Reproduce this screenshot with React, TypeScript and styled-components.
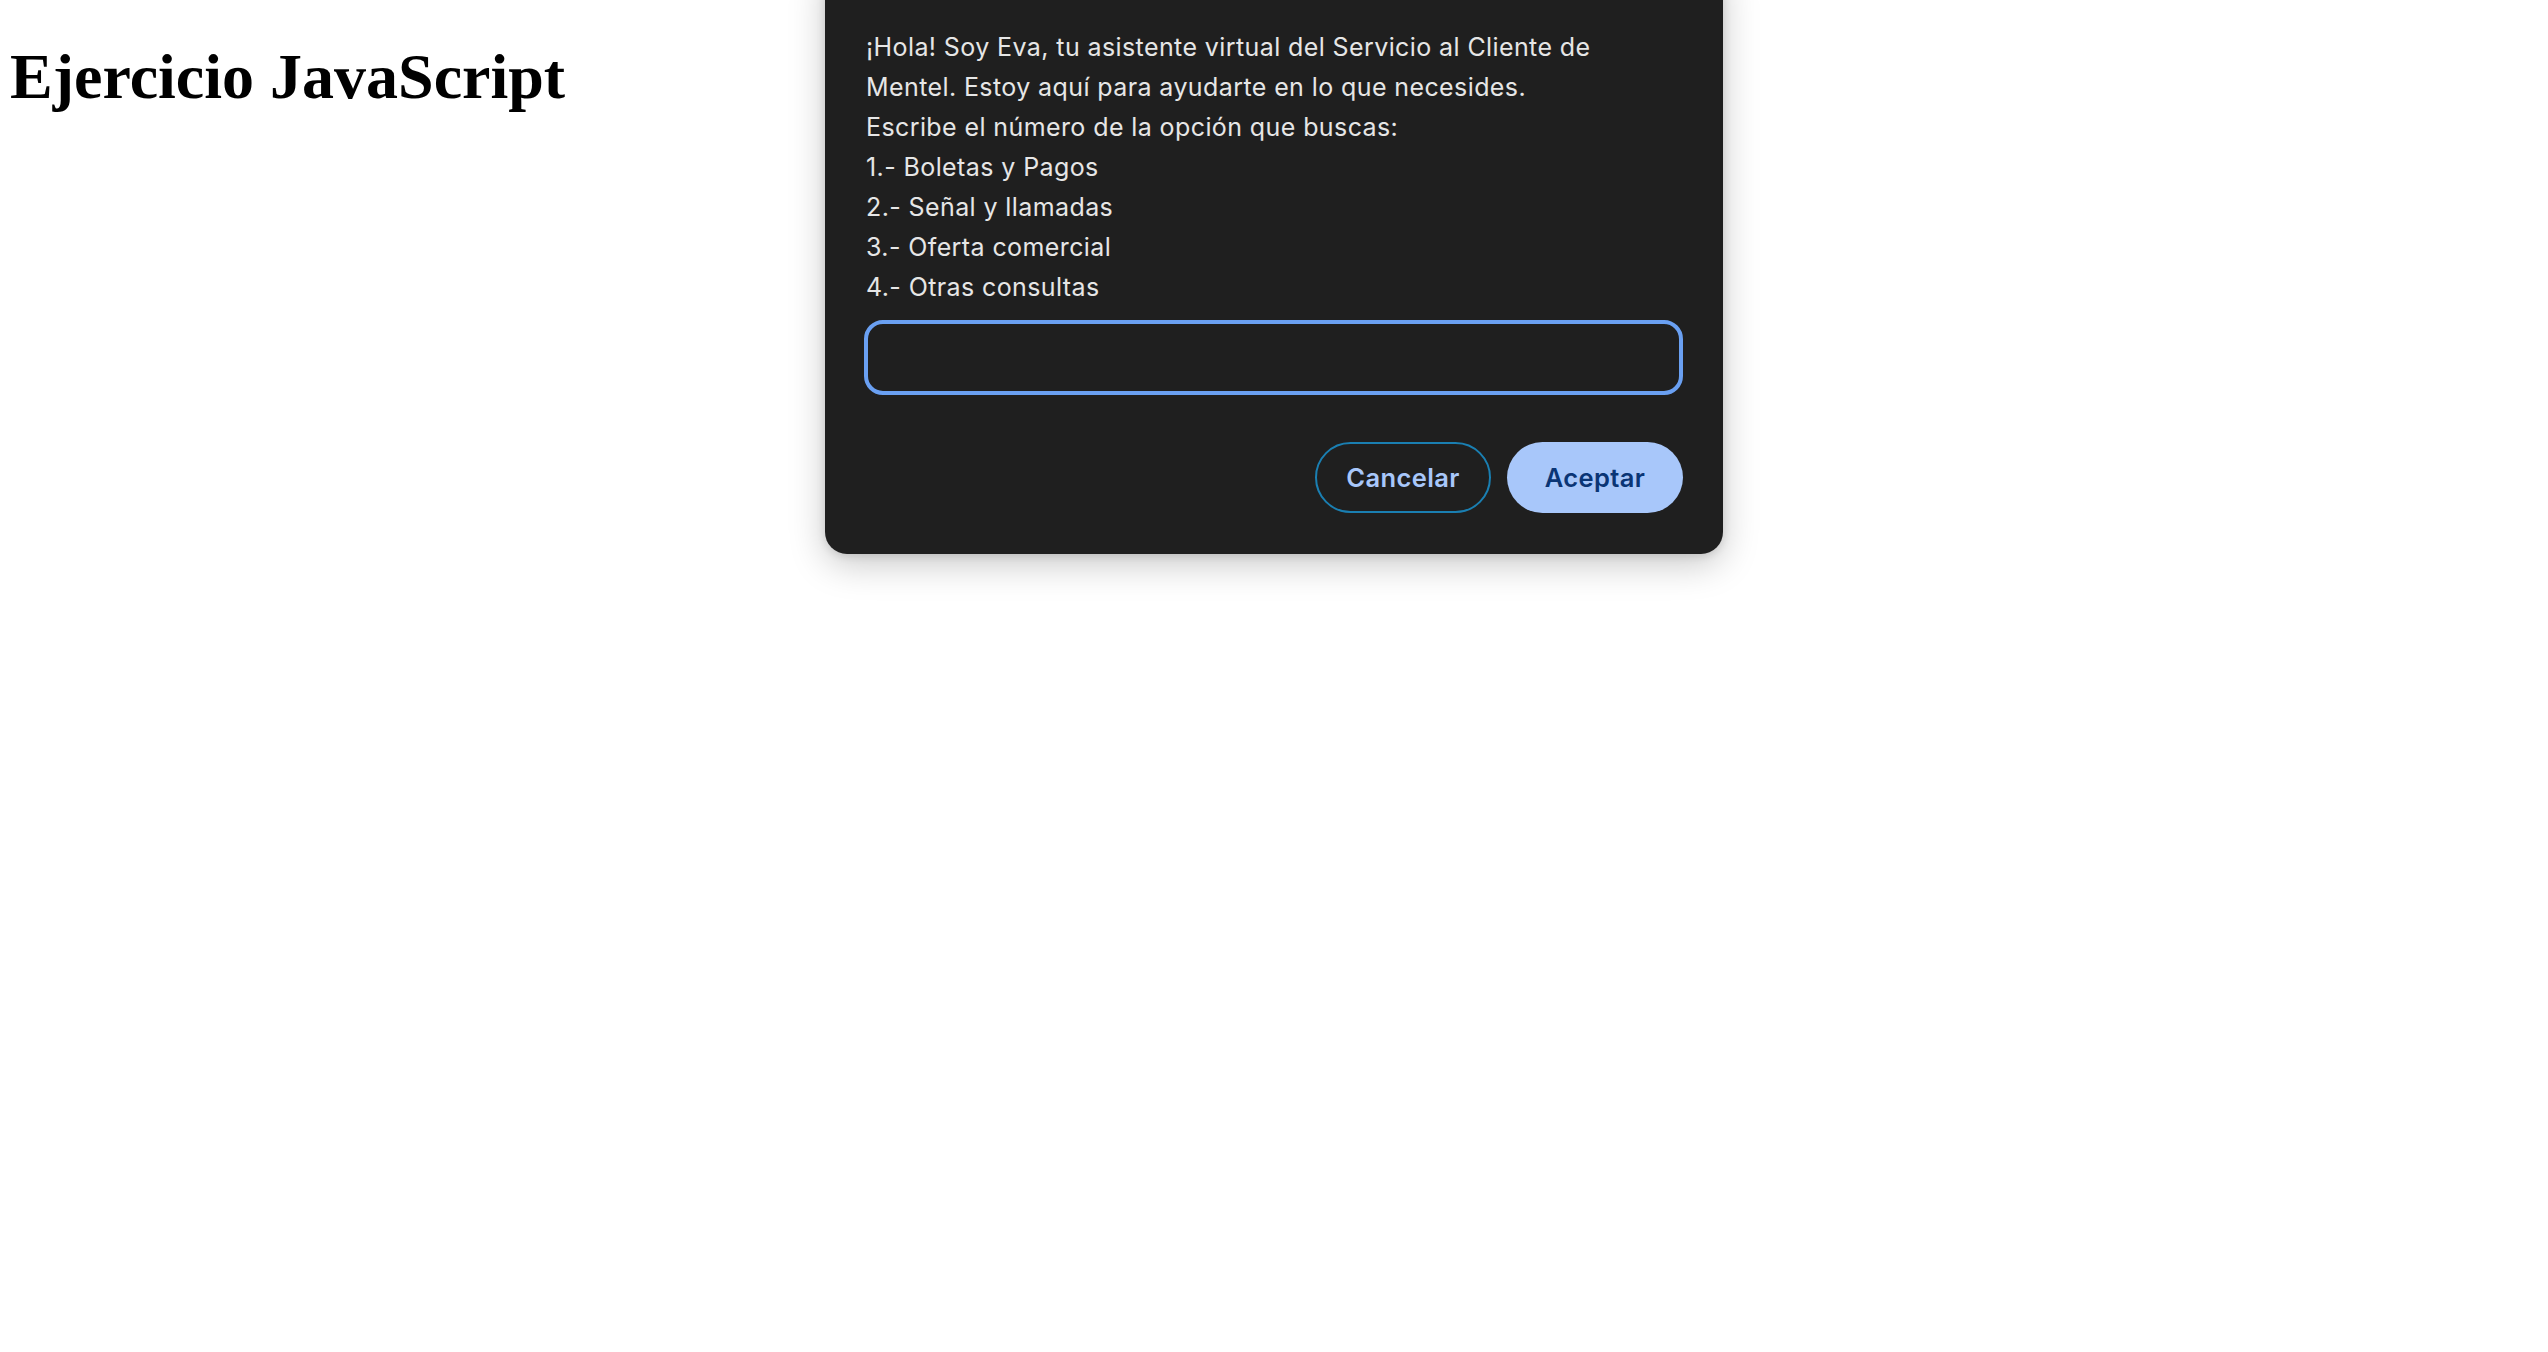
import React from "react";
import styled, { createGlobalStyle } from "styled-components";

const GlobalStyle = createGlobalStyle`
  html, body {
    margin: 0;
    padding: 0;
    background: #ffffff;
  }
  body {
    font-family: "Liberation Serif", "Times New Roman", serif;
  }
`;

const Page = styled.div`
  position: relative;
  min-height: 1352px;
  padding: 1px 0 0 10px;
  box-sizing: border-box;
`;

const Heading = styled.h1`
  font-family: "Liberation Serif", "Times New Roman", serif;
  font-weight: 700;
  font-size: 64px;
  margin: 39px 0 0 0;
  color: #000;
`;

const Dialog = styled.div`
  position: absolute;
  top: -40px;
  left: 825px;
  width: 898px;
  box-sizing: border-box;
  padding: 67px 40px 41px 41px;
  background: #1f1f1f;
  border-radius: 22px;
  box-shadow: 0 10px 36px rgba(0, 0, 0, 0.22), 0 2px 8px rgba(0, 0, 0, 0.12);
  font-family: Inter, "Noto Sans", sans-serif;
  display: flex;
  flex-direction: column;
`;

const Message = styled.div`
  color: #e6e6e6;
  font-size: 25px;
  letter-spacing: 0.4px;
  line-height: 40px;
  white-space: pre-line;
`;

const PromptInput = styled.input`
  margin: 13px 0 0 -2px;
  height: 75px;
  box-sizing: border-box;
  border: 4px solid #6aa0f2;
  border-radius: 19px;
  background: #1f1f1f;
  color: #e3e3e3;
  font-family: Inter, "Noto Sans", sans-serif;
  font-size: 24px;
  padding: 0 16px;
  outline: none;
`;

const Actions = styled.div`
  display: flex;
  justify-content: flex-end;
  gap: 16px;
  margin-top: 47px;
  margin-right: 0;
`;

const Button = styled.button<{ $primary?: boolean }>`
  width: 176px;
  height: 71px;
  border-radius: 36px;
  font-family: Inter, "Noto Sans", sans-serif;
  font-size: 25.5px;
  letter-spacing: 0.4px;
  font-weight: 600;
  cursor: pointer;
  box-sizing: border-box;
  padding: 0;
  border: ${(p) => (p.$primary ? "none" : "2px solid #1a7fb2")};
  background: ${(p) => (p.$primary ? "#a8c7fa" : "transparent")};
  color: ${(p) => (p.$primary ? "#0a3575" : "#a8c7fa")};
`;

const message = `¡Hola! Soy Eva, tu asistente virtual del Servicio al Cliente de
Mentel. Estoy aquí para ayudarte en lo que necesides.
Escribe el número de la opción que buscas:
1.- Boletas y Pagos
2.- Señal y llamadas
3.- Oferta comercial
4.- Otras consultas`;

export default function App() {
  return (
    <>
      <GlobalStyle />
      <Page>
        <Heading>Ejercicio JavaScript</Heading>
        <Dialog>
          <Message>{message}</Message>
          <PromptInput type="text" />
          <Actions>
            <Button>Cancelar</Button>
            <Button $primary>Aceptar</Button>
          </Actions>
        </Dialog>
      </Page>
    </>
  );
}
